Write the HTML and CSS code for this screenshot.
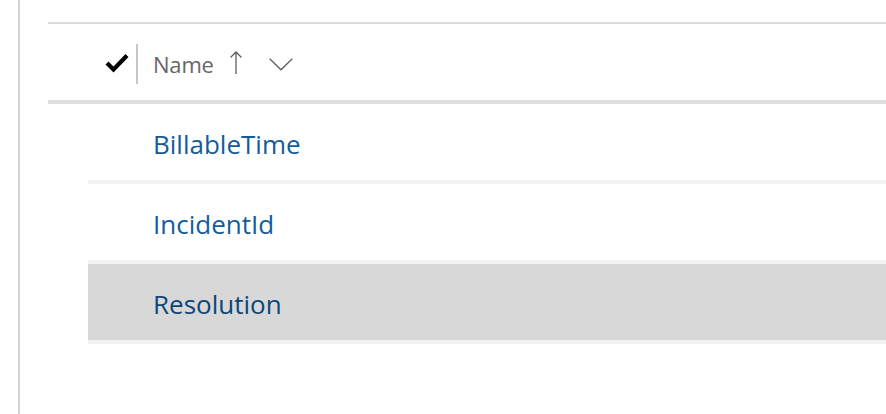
FILE: index.html
```html
<!DOCTYPE html>
<html>
<head>
<meta charset="utf-8">
<link rel="stylesheet" href="styles.css">
</head>
<body>
<div class="page">
  <div class="rail"></div>
  <div class="main">
    <div class="list">
      <div class="header">
        <div class="check-cell">
          <svg class="check" width="24" height="20" viewBox="0 0 24 20"><path d="M2 10 L8.5 16.5 L22 2.5" fill="none" stroke="#000" stroke-width="4.2"/></svg>
        </div>
        <div class="col-divider"></div>
        <div class="col-name">
          <span class="col-title">Name</span>
          <svg class="sort" width="14" height="24" viewBox="0 0 14 24"><path d="M7 1 V23 M1.5 6.5 L7 1 L12.5 6.5" fill="none" stroke="#605e5c" stroke-width="1.3"/></svg>
          <svg class="chev" width="24" height="13" viewBox="0 0 24 13"><path d="M0.7 0.7 L12 11.8 L23.3 0.7" fill="none" stroke="#605e5c" stroke-width="1.3"/></svg>
        </div>
      </div>
      <div class="row"><span class="link">BillableTime</span></div>
      <div class="row"><span class="link">IncidentId</span></div>
      <div class="row selected"><span class="link">Resolution</span></div>
    </div>
  </div>
</div>
</body>
</html>
```
FILE: styles.css
```css
html, body {
  margin: 0;
  padding: 0;
  background: #fff;
  font-family: "Open Sans", "Noto Sans", sans-serif;
}
.page {
  display: flex;
  height: 414px;
  overflow: hidden;
}
.rail {
  width: 18px;
  flex: none;
  border-right: 2px solid #d4d4d4;
}
.main {
  flex: 1;
  padding: 22px 0 0 28px;
}
.list {
  border-top: 2px solid #dadada;
}
.header {
  height: 76px;
  border-bottom: 4px solid #e1dfdd;
  display: flex;
  align-items: center;
}
.check-cell {
  padding-left: 57px;
  box-sizing: border-box;
  display: flex;
  align-items: center;
  width: 88px;
}
.check {
  display: block;
  margin-top: 2px;
}
.col-divider {
  width: 2px;
  height: 40px;
  background: #c8c6c4;
  margin-top: 3px;
}
.col-name {
  display: flex;
  align-items: center;
  padding-left: 15px;
  margin-top: 3px;
}
.col-title {
  font-size: 22px;
  color: #68666a;
  letter-spacing: -0.2px;
}
.sort {
  display: block;
  margin-left: 15px;
  margin-bottom: 2px;
}
.chev {
  display: block;
  margin-left: 26px;
  margin-top: 1px;
}
.row {
  margin-left: 40px;
  height: 80px;
  box-sizing: border-box;
  padding-top: 3px;
  border-bottom: 4px solid #f3f2f1;
  display: flex;
  align-items: center;
  padding-left: 65px;
}
.row.selected {
  background: #d8d8d8;
}
.link {
  font-size: 26px;
  color: #135c9b;
  letter-spacing: 0;
}
.row.selected .link {
  color: #0e4678;
}
```
